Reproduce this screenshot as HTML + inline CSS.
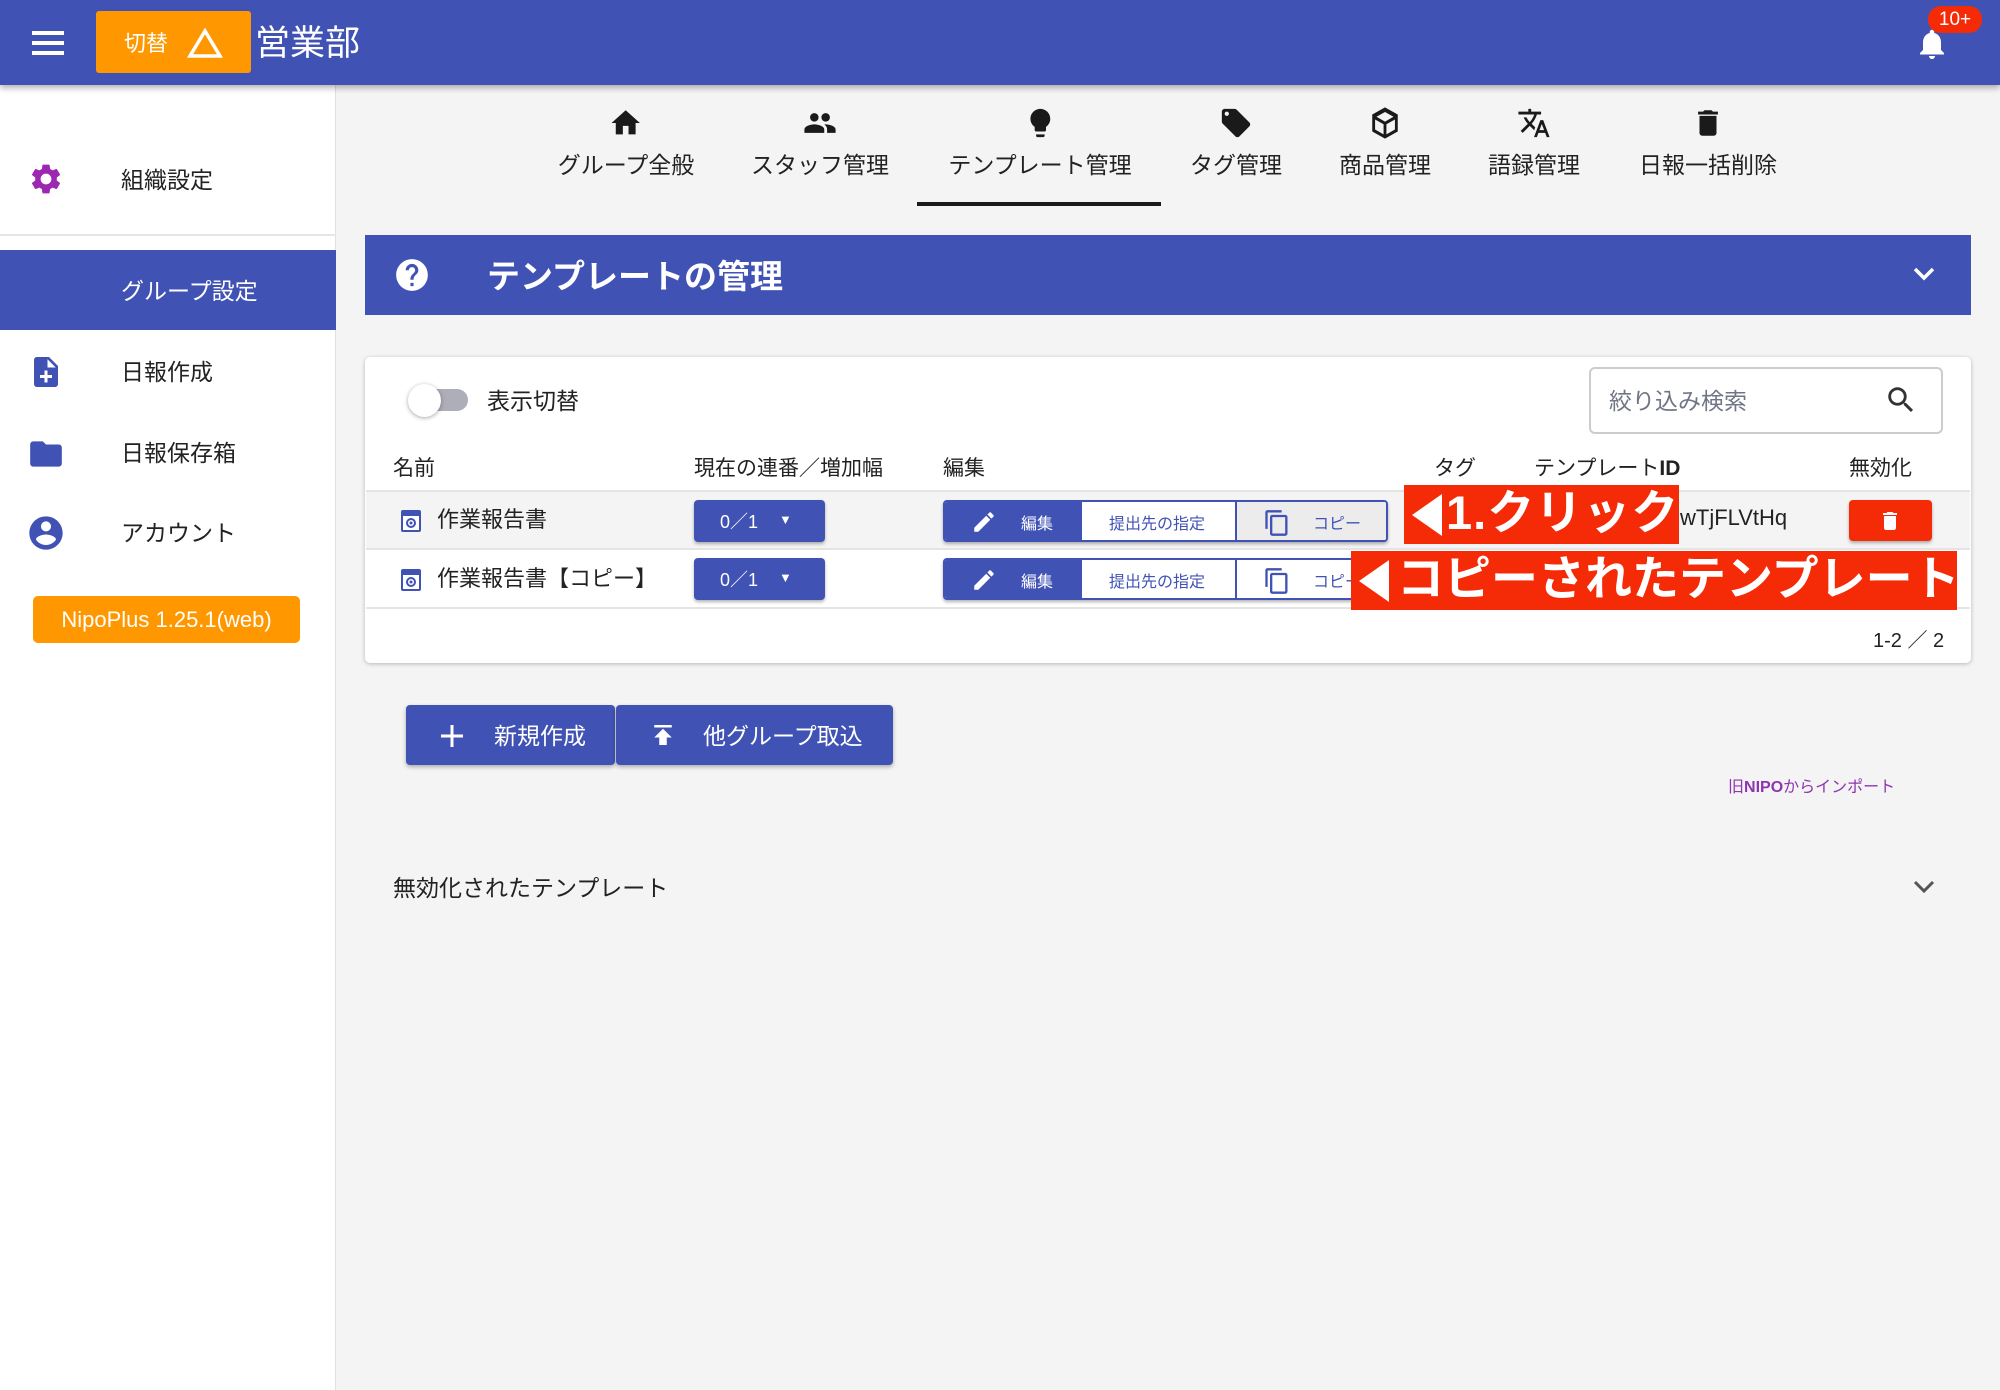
<!DOCTYPE html>
<html><head><meta charset="utf-8"><style>
*{margin:0;padding:0;box-sizing:border-box}
body{width:2000px;height:1390px;position:relative;overflow:hidden;background:#f4f4f4;font-family:"Liberation Sans","Noto Sans CJK JP",sans-serif;color:#222}
.a{position:absolute}
.hdr{left:0;top:0;width:2000px;height:85px;background:#4152b5;box-shadow:0 3px 6px rgba(0,0,0,.3);z-index:3}
.side{left:0;top:85px;width:336px;height:1305px;background:#fff;border-right:1px solid #e0e0e0}
.si{font-size:23px;color:#222;white-space:nowrap}
.tab{text-align:center;font-size:23px;color:#222;white-space:nowrap;transform:translateX(-50%)}
.tab svg{display:block;margin:0 auto 6px}
.btnb{background:#4152b5;color:#fff;border-radius:4px}
.cell{font-size:21px;white-space:nowrap}
.red{background:#f52a07;color:#fff;font-weight:bold;white-space:nowrap}
</style></head><body>
<div class="a hdr">
  <div class="a" style="left:32px;top:31px;width:32px;height:4px;background:#fff"></div>
  <div class="a" style="left:32px;top:41px;width:32px;height:4px;background:#fff"></div>
  <div class="a" style="left:32px;top:51px;width:32px;height:4px;background:#fff"></div>
  <div class="a" style="left:96px;top:11px;width:155px;height:62px;background:#ff9800;border-radius:3px"></div>
  <div class="a" style="left:124px;top:26px;font-size:22px;color:#fff">切替</div>
  <svg class="a" style="left:187px;top:28px" width="36" height="30"><path d="M18 3 L33 28 L3 28 Z" fill="none" stroke="#fff" stroke-width="3.5"/></svg>
  <div class="a" style="left:255px;top:15px;font-size:35px;color:#fff">営業部</div>
  <svg class="a" style="left:1914px;top:24px" width="36" height="40" viewBox="0 0 24 24"><path fill="#fff" d="M12 22c1.1 0 2-.9 2-2h-4c0 1.1.9 2 2 2zm6-6v-5c0-3.07-1.630-5.640-4.5-6.32V4c0-.83-.67-1.5-1.5-1.5s-1.5.67-1.5 1.5v.68C7.64 5.36 6 7.92 6 11v5l-2 2v1h16v-1l-2-2z"/></svg>
  <div class="a" style="left:1928px;top:6px;width:54px;height:27px;background:#f52a07;border-radius:13px;color:#fff;font-size:19px;text-align:center;line-height:27px">10+</div>
</div>

<div class="a side">
  <svg class="a" style="left:28px;top:76px" width="36" height="36" viewBox="0 0 24 24"><path fill="#9c27b0" d="M19.14 12.94c.04-.3.06-.61.06-.94 0-.32-.02-.64-.07-.94l2.03-1.58a.49.49 0 00.12-.61l-1.92-3.32a.49.49 0 00-.59-.22l-2.39.96c-.5-.38-1.03-.7-1.62-.94l-.36-2.54a.48.48 0 00-.48-.41h-3.84c-.24 0-.43.17-.47.41l-.36 2.54c-.59.24-1.13.57-1.62.94l-2.39-.96a.48.48 0 00-.59.22L2.74 8.87c-.12.21-.08.47.12.61l2.03 1.58c-.05.3-.09.63-.09.94s.02.64.07.94l-2.03 1.58a.49.49 0 00-.12.61l1.92 3.32c.12.22.37.29.59.22l2.39-.96c.5.38 1.03.7 1.62.94l.36 2.54c.05.24.24.41.48.41h3.84c.24 0 .44-.17.47-.41l.36-2.54c.59-.24 1.13-.56 1.62-.94l2.39.96c.22.08.47 0 .59-.22l1.920-3.32c.12-.22.07-.47-.12-.61l-2.01-1.58zM12 15.6c-1.98 0-3.6-1.62-3.6-3.6s1.62-3.6 3.6-3.6 3.6 1.62 3.6 3.6-1.62 3.6-3.6 3.6z"/></svg>
  <div class="a si" style="left:121px;top:76px">組織設定</div>
  <div class="a" style="left:0;top:149px;width:336px;height:2px;background:#e6e6e6"></div>
  <div class="a" style="left:0;top:165px;width:336px;height:80px;background:#4152b5"></div>
  <div class="a si" style="left:121px;top:187px;color:#fff">グループ設定</div>
  <svg class="a" style="left:28px;top:268px" width="36" height="38" viewBox="0 0 24 24"><path fill="#4152b5" d="M14 2H6c-1.1 0-2 .9-2 2v16c0 1.1.9 2 2 2h12c1.1 0 2-.9 2-2V8l-6-6zm2 14h-3v3h-2v-3H8v-2h3v-3h2v3h3v2zm-3-7V3.5L18.5 9H13z"/></svg>
  <div class="a si" style="left:121px;top:268px">日報作成</div>
  <svg class="a" style="left:26px;top:350px" width="40" height="38" viewBox="0 0 24 24"><path fill="#4152b5" d="M10 4H4c-1.1 0-2 .9-2 2v12c0 1.1.9 2 2 2h16c1.1 0 2-.9 2-2V8c0-1.1-.9-2-2-2h-8l-2-2z"/></svg>
  <div class="a si" style="left:121px;top:349px">日報保存箱</div>
  <svg class="a" style="left:26px;top:428px" width="40" height="40" viewBox="0 0 24 24"><path fill="#4152b5" d="M12 2C6.48 2 2 6.48 2 12s4.48 10 10 10 10-4.48 10-10S17.52 2 12 2zm0 3c1.66 0 3 1.34 3 3s-1.34 3-3 3-3-1.34-3-3 1.34-3 3-3zm0 14.2c-2.5 0-4.71-1.28-6-3.22.03-1.99 4-3.08 6-3.08 1.99 0 5.97 1.09 6 3.08-1.29 1.94-3.5 3.22-6 3.22z"/></svg>
  <div class="a si" style="left:121px;top:429px">アカウント</div>
  <div class="a" style="left:33px;top:511px;width:267px;height:47px;background:#ff9800;border-radius:5px;color:#fff;font-size:22px;text-align:center;line-height:47px">NipoPlus 1.25.1(web)</div>
</div>

<!-- tabs -->
<div class="a tab" style="left:626px;top:106px"><svg width="34" height="34" viewBox="0 0 24 24"><path fill="#1a1a1a" d="M10 20v-6h4v6h5v-8h3L12 3 2 12h3v8z"/></svg>グループ全般</div>
<div class="a tab" style="left:820px;top:106px"><svg width="38" height="34" viewBox="0 0 24 24"><path fill="#1a1a1a" d="M16 11c1.66 0 2.99-1.34 2.99-3S17.66 5 16 5c-1.66 0-3 1.34-3 3s1.34 3 3 3zm-8 0c1.66 0 2.99-1.34 2.99-3S9.66 5 8 5C6.34 5 5 6.34 5 8s1.34 3 3 3zm0 2c-2.33 0-7 1.17-7 3.5V19h14v-2.5c0-2.33-4.67-3.5-7-3.5zm8 0c-.29 0-.62.02-.97.05 1.16.84 1.97 1.970 1.97 3.45V19h6v-2.5c0-2.33-4.67-3.5-7-3.5z"/></svg>スタッフ管理</div>
<div class="a tab" style="left:1040px;top:106px"><svg width="34" height="34" viewBox="0 0 24 24"><path fill="#1a1a1a" d="M9 21c0 .55.45 1 1 1h4c.55 0 1-.45 1-1v-1H9v1zm3-19C8.14 2 5 5.14 5 9c0 2.38 1.19 4.47 3 5.74V17c0 .55.45 1 1 1h6c.55 0 1-.45 1-1v-2.26c1.81-1.27 3-3.36 3-5.74 0-3.86-3.14-7-7-7z"/></svg>テンプレート管理</div>
<div class="a" style="left:917px;top:202px;width:244px;height:4px;background:#1a1a1a"></div>
<div class="a tab" style="left:1236px;top:106px"><svg width="34" height="34" viewBox="0 0 24 24"><path fill="#1a1a1a" d="M21.41 11.58l-9-9C12.05 2.22 11.55 2 11 2H4c-1.1 0-2 .9-2 2v7c0 .55.22 1.05.59 1.42l9 9c.36.36.86.58 1.41.58.55 0 1.05-.22 1.41-.59l7-7c.37-.36.59-.86.59-1.41 0-.55-.23-1.06-.59-1.42zM5.5 7C4.67 7 4 6.33 4 5.5S4.67 4 5.5 4 7 4.67 7 5.5 6.33 7 5.5 7z"/></svg>タグ管理</div>
<div class="a tab" style="left:1385px;top:106px"><svg width="34" height="34" viewBox="0 0 24 24"><path fill="#1a1a1a" d="M12 1L3 6v12l9 5 9-5V6l-9-5zm-1 19l-6-3.4V9.5l6 3.4V20zm1-9L6 7.6 12 4.2l6 3.4L12 11zm1 9v-7.1l6-3.4v7.1L13 20z"/></svg>商品管理</div>
<div class="a tab" style="left:1534px;top:106px"><svg width="36" height="34" viewBox="0 0 24 24"><path fill="#1a1a1a" d="M12.87 15.07l-2.54-2.51.03-.03A17.52 17.52 0 0014.07 6H17V4h-7V2H8v2H1v2h11.17C11.5 7.92 10.44 9.75 9 11.35 8.07 10.32 7.3 9.19 6.69 8h-2c.73 1.63 1.73 3.17 2.98 4.56l-5.09 5.02L4 19l5-5 3.11 3.11.76-2.04zM18.5 10h-2L12 22h2l1.12-3h4.75L21 22h2l-4.5-12zm-2.62 7l1.62-4.33L19.12 17h-3.24z"/></svg>語録管理</div>
<div class="a tab" style="left:1708px;top:106px"><svg width="34" height="34" viewBox="0 0 24 24"><path fill="#1a1a1a" d="M6 19c0 1.1.9 2 2 2h8c1.1 0 2-.9 2-2V7H6v12zM19 4h-3.5l-1-1h-5l-1 1H5v2h14V4z"/></svg>日報一括削除</div>

<!-- blue panel -->
<div class="a" style="left:365px;top:235px;width:1606px;height:80px;background:#4152b5"></div>
<svg class="a" style="left:393px;top:256px" width="38" height="38" viewBox="0 0 24 24"><path fill="#fff" d="M12 2C6.48 2 2 6.48 2 12s4.48 10 10 10 10-4.48 10-10S17.52 2 12 2zm1 17h-2v-2h2v2zm2.07-7.75l-.9.92C13.45 12.9 13 13.5 13 15h-2v-.5c0-1.1.45-2.1 1.17-2.83l1.24-1.26c.37-.36.59-.86.59-1.41 0-1.1-.9-2-2-2s-2 .9-2 2H8c0-2.21 1.79-4 4-4s4 1.79 4 4c0 .88-.36 1.68-.93 2.25z"/></svg>
<div class="a" style="left:487px;top:250px;font-size:33px;font-weight:bold;color:#fff">テンプレートの管理</div>
<svg class="a" style="left:1911px;top:264px" width="26" height="20"><path d="M4 5 L13 14 L22 5" fill="none" stroke="#fff" stroke-width="3.5"/></svg>

<!-- card -->
<div class="a" style="left:365px;top:357px;width:1606px;height:306px;background:#fff;border-radius:5px;box-shadow:0 1px 4px rgba(0,0,0,.25)"></div>
<div class="a" style="left:420px;top:389px;width:48px;height:22px;background:#aeaeb8;border-radius:11px"></div>
<div class="a" style="left:408px;top:384px;width:33px;height:33px;background:#fff;border-radius:50%;box-shadow:0 1px 4px rgba(0,0,0,.35)"></div>
<div class="a" style="left:487px;top:382px;font-size:23px">表示切替</div>
<div class="a" style="left:1589px;top:367px;width:354px;height:67px;border:2px solid #ccc;border-radius:6px"></div>
<div class="a" style="left:1609px;top:382px;font-size:23px;color:#707585">絞り込み検索</div>
<svg class="a" style="left:1884px;top:382px" width="34" height="36" viewBox="0 0 24 24"><path fill="#333" d="M15.5 14h-.79l-.28-.27A6.47 6.47 0 0016 9.5 6.5 6.5 0 109.5 16c1.61 0 3.09-.59 4.23-1.57l.27.28v.79l5 4.99L20.49 19l-4.99-5zm-6 0C7.01 14 5 11.99 5 9.5S7.01 5 9.5 5 14 7.01 14 9.5 11.99 14 9.5 14z"/></svg>

<div class="a cell" style="left:393px;top:452px">名前</div>
<div class="a cell" style="left:694px;top:452px">現在の連番／増加幅</div>
<div class="a cell" style="left:943px;top:452px">編集</div>
<div class="a cell" style="left:1434px;top:452px">タグ</div>
<div class="a cell" style="left:1534px;top:452px">テンプレート<b>ID</b></div>
<div class="a cell" style="left:1849px;top:452px">無効化</div>

<div class="a" style="left:366px;top:490px;width:1604px;height:60px;background:#f4f4f4;border-top:2px solid #e4e4e4;border-bottom:2px solid #e4e4e4"></div>
<div class="a" style="left:366px;top:607px;width:1604px;height:2px;background:#e4e4e4"></div>

<!-- rows -->
<svg class="a" style="left:400px;top:509px" width="22" height="24" viewBox="0 0 22 24"><rect x="1" y="1" width="20" height="22" rx="2" fill="#4152b5"/><rect x="3" y="7" width="16" height="14" fill="#fff"/><circle cx="11" cy="14" r="4" fill="none" stroke="#4152b5" stroke-width="2"/><circle cx="11" cy="14" r="1.5" fill="#4152b5"/></svg>
<div class="a cell" style="left:437px;top:502px;font-size:22px">作業報告書</div>
<svg class="a" style="left:400px;top:568px" width="22" height="24" viewBox="0 0 22 24"><rect x="1" y="1" width="20" height="22" rx="2" fill="#4152b5"/><rect x="3" y="7" width="16" height="14" fill="#fff"/><circle cx="11" cy="14" r="4" fill="none" stroke="#4152b5" stroke-width="2"/><circle cx="11" cy="14" r="1.5" fill="#4152b5"/></svg>
<div class="a cell" style="left:437px;top:561px;font-size:22px">作業報告書【コピー】</div>

<div class="a btnb" style="left:694px;top:500px;width:131px;height:42px;box-shadow:0 2px 3px rgba(0,0,0,.3)"><span class="a" style="left:26px;top:8px;font-size:18px">0／1</span><span class="a" style="left:85px;top:12px;font-size:13px">▼</span></div>
<div class="a btnb" style="left:694px;top:558px;width:131px;height:42px;box-shadow:0 2px 3px rgba(0,0,0,.3)"><span class="a" style="left:26px;top:8px;font-size:18px">0／1</span><span class="a" style="left:85px;top:12px;font-size:13px">▼</span></div>

<!-- button groups -->
<div class="a" style="left:943px;top:500px;width:445px;height:42px;border:2px solid #4152b5;border-radius:4px;background:#fff;box-shadow:0 2px 3px rgba(0,0,0,.3);overflow:hidden">
 <div class="a" style="left:0;top:0;width:137px;height:40px;background:#4152b5"></div>
 <svg class="a" style="left:26px;top:7px" width="26" height="26" viewBox="0 0 24 24"><path fill="#fff" d="M3 17.25V21h3.75L17.81 9.94l-3.75-3.75L3 17.25zM20.71 7.04a1 1 0 000-1.41l-2.34-2.34a1 1 0 00-1.41 0l-1.83 1.83 3.75 3.75 1.83-1.83z"/></svg>
 <span class="a" style="left:76px;top:8px;font-size:16px;color:#fff">編集</span>
 <span class="a" style="left:164px;top:8px;font-size:16px;color:#4152b5">提出先の指定</span>
 <div class="a" style="left:290px;top:0;width:2px;height:40px;background:#4152b5"></div>
 <div class="a" style="left:292px;top:0;width:153px;height:40px;background:#ececec"></div>
 <svg class="a" style="left:318px;top:6px" width="28" height="30" viewBox="0 0 24 24"><path fill="#4152b5" d="M16 1H4c-1.1 0-2 .9-2 2v14h2V3h12V1zm3 4H8c-1.1 0-2 .9-2 2v14c0 1.1.9 2 2 2h11c1.1 0 2-.9 2-2V7c0-1.1-.9-2-2-2zm0 16H8V7h11v14z"/></svg>
 <span class="a" style="left:368px;top:8px;font-size:16px;color:#4152b5">コピー</span>
</div>
<div class="a" style="left:943px;top:558px;width:445px;height:42px;border:2px solid #4152b5;border-radius:4px;background:#fff;box-shadow:0 2px 3px rgba(0,0,0,.3);overflow:hidden">
 <div class="a" style="left:0;top:0;width:137px;height:40px;background:#4152b5"></div>
 <svg class="a" style="left:26px;top:7px" width="26" height="26" viewBox="0 0 24 24"><path fill="#fff" d="M3 17.25V21h3.75L17.81 9.94l-3.75-3.75L3 17.25zM20.71 7.04a1 1 0 000-1.41l-2.34-2.34a1 1 0 00-1.41 0l-1.83 1.83 3.75 3.75 1.83-1.83z"/></svg>
 <span class="a" style="left:76px;top:8px;font-size:16px;color:#fff">編集</span>
 <span class="a" style="left:164px;top:8px;font-size:16px;color:#4152b5">提出先の指定</span>
 <div class="a" style="left:290px;top:0;width:2px;height:40px;background:#4152b5"></div>
 <svg class="a" style="left:318px;top:6px" width="28" height="30" viewBox="0 0 24 24"><path fill="#4152b5" d="M16 1H4c-1.1 0-2 .9-2 2v14h2V3h12V1zm3 4H8c-1.1 0-2 .9-2 2v14c0 1.1.9 2 2 2h11c1.1 0 2-.9 2-2V7c0-1.1-.9-2-2-2zm0 16H8V7h11v14z"/></svg>
 <span class="a" style="left:368px;top:8px;font-size:16px;color:#4152b5">コピー</span>
</div>

<div class="a cell" style="left:1680px;top:505px;font-size:22px">wTjFLVtHq</div>
<div class="a" style="left:1849px;top:500px;width:83px;height:41px;background:#f52a07;border-radius:4px;box-shadow:0 2px 3px rgba(0,0,0,.3)"></div>
<svg class="a" style="left:1878px;top:508px" width="24" height="26" viewBox="0 0 24 24"><path fill="#fff" d="M6 19c0 1.1.9 2 2 2h8c1.1 0 2-.9 2-2V7H6v12zM19 4h-3.5l-1-1h-5l-1 1H5v2h14V4z"/></svg>

<!-- annotations -->
<div class="a red" style="left:1404px;top:485px;width:275px;height:59px;overflow:hidden"><svg class="a" style="left:8px;top:9px" width="30" height="42"><path d="M30 0 L0 21 L30 42Z" fill="#fff"/></svg><span class="a" style="left:42px;top:-2px;font-size:47px;line-height:59px;letter-spacing:1px">1.クリック</span></div>
<div class="a red" style="left:1351px;top:551px;width:606px;height:59px"><svg class="a" style="left:8px;top:9px" width="30" height="42"><path d="M30 0 L0 21 L30 42Z" fill="#fff"/></svg><span class="a" style="left:46px;top:-2px;font-size:47px;line-height:59px">コピーされたテンプレート</span></div>

<div class="a cell" style="left:1873px;top:624px;font-size:20px">1-2 ／ 2</div>

<!-- bottom buttons -->
<div class="a btnb" style="left:406px;top:705px;width:209px;height:60px;box-shadow:0 2px 4px rgba(0,0,0,.3)"></div>
<div class="a btnb" style="left:616px;top:705px;width:277px;height:60px;box-shadow:0 2px 4px rgba(0,0,0,.3)"></div>
<svg class="a" style="left:439px;top:723px" width="26" height="26"><path d="M13 2V24M2 13H24" stroke="#fff" stroke-width="3"/></svg>
<div class="a" style="left:494px;top:717px;font-size:23px;color:#fff">新規作成</div>
<svg class="a" style="left:648px;top:718px" width="30" height="34" viewBox="0 0 24 24"><path fill="#fff" d="M5 4v2h14V4H5zm0 10h4v6h6v-6h4l-7-7-7 7z"/></svg>
<div class="a" style="left:703px;top:717px;font-size:23px;color:#fff">他グループ取込</div>

<div class="a" style="left:1728px;top:773px;font-size:16px;color:#8e35b0">旧<b>NIPO</b>からインポート</div>
<div class="a" style="left:393px;top:869px;font-size:23px">無効化されたテンプレート</div>
<svg class="a" style="left:1912px;top:878px" width="24" height="18"><path d="M3 4 L12 13 L21 4" fill="none" stroke="#555" stroke-width="3"/></svg>
</body></html>
